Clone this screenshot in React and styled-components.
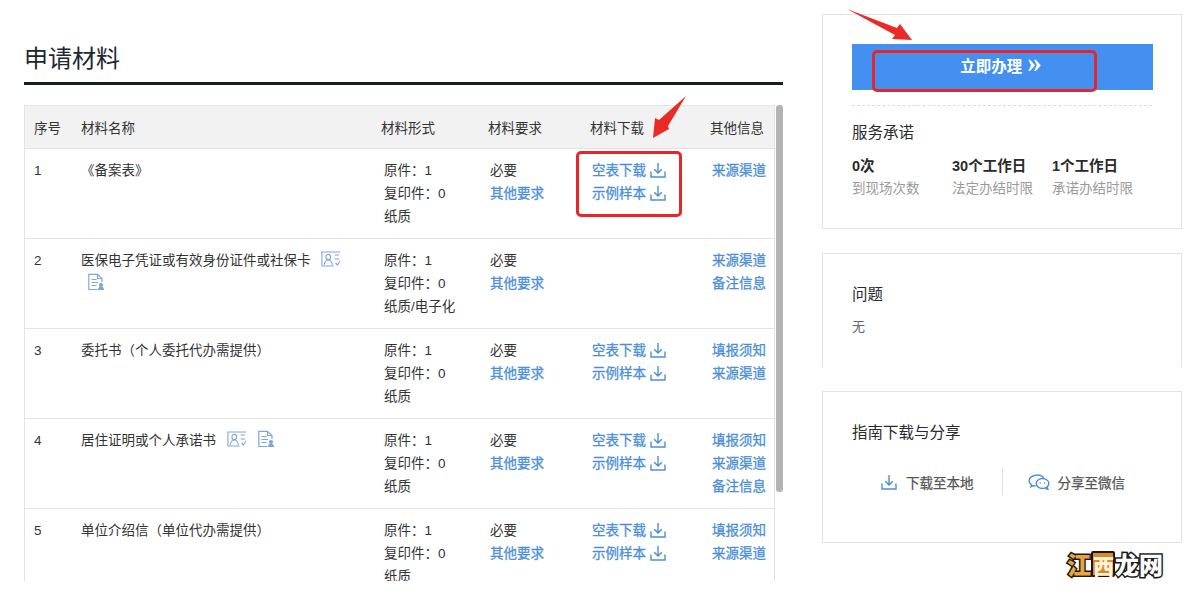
import React from "react";
import styled, { createGlobalStyle } from "styled-components";

const Global = createGlobalStyle`
  html, body { margin: 0; padding: 0; background: #fff; overflow: hidden; }
  body { font-family: "Liberation Sans", "Noto Sans CJK SC", sans-serif; color: #333; }
  * { box-sizing: border-box; }
`;

const Page = styled.div`
  position: relative; width: 1200px; height: 594px; overflow: hidden;
  display: flex; gap: 39px; padding: 14px 0 0 24px;
`;
const Main = styled.main`width: 759px; padding-top: 28px; flex: none;`;
const Heading = styled.h2`
  margin: 0; height: 43px; line-height: 34px; font-size: 24px; font-weight: 400; color: #1d2730;
  border-bottom: 3px solid #141e27;
`;
const TableArea = styled.div`display: flex; gap: 1px; margin-top: 20px;`;
const TableClip = styled.div`
  width: 751px; height: 476px; overflow: hidden; flex: none;
  border-left: 1px solid #e3e3e3; border-right: 1px solid #e3e3e3; border-top: 1px solid #e6e6e6;
`;
const Track = styled.div`width: 7px; flex: none;`;
const Thumb = styled.div`width: 7px; height: 387px; background: #b4b4b4; border-radius: 3px;`;
const Table = styled.table`
  width: 749px; table-layout: fixed; border-collapse: collapse; font-size: 13.5px; color: #333;
`;
const Th = styled.th`
  width: ${p => p.$w}px; height: 42px; padding: 0 0 0 ${p => p.$pl || 10}px; text-align: left;
  font-weight: 400; background: #f2f2f2; border-bottom: 1px solid #e3e3e3; white-space: nowrap;
`;
const Tr = styled.tr`border-bottom: 1px solid #e3e3e3;`;
const Td = styled.td`
  height: 90px; vertical-align: top; line-height: 23px;
  padding: 10px ${p => p.$pr || 0}px 0 ${p => p.$pl || 12}px;
`;
const Line = styled.div`white-space: nowrap;`;
const Link = styled.div`
  display: flex; align-items: center; gap: 4px; white-space: nowrap; color: #4d8fd6; height: 23px;
  -webkit-text-stroke: 0.3px #4d8fd6;
`;
const DlSvg = styled.svg`width: 16px; height: 16px; flex: none; fill: none; stroke: ${p => p.$c || "#4d8fd6"}; stroke-width: 1.4;`;
const TagIcon = styled.svg`
  display: inline-block; vertical-align: -2px; margin-left: 7px; height: 16px; width: ${p => p.$w}px;
  fill: none; stroke: #7fa6da; stroke-width: 1.2;
`;

const Side = styled.aside`width: 360px; flex: none; display: flex; flex-direction: column;`;
const Card = styled.section`
  border: 1px solid #e3e3e3; padding: 29px 29px 0;
  height: ${p => p.$h}px; margin-bottom: ${p => p.$mb || 0}px;
  ${p => p.$open && "border-bottom: none;"}
`;
const Cta = styled.button`
  display: flex; align-items: center; justify-content: center; gap: 5px; width: 301px; height: 46px;
  border: none; background: #4390f0; color: #fff; padding: 0 3px 5px 0;
  font: 700 15.5px "Liberation Serif", "Noto Sans CJK SC", serif;
`;
const Chev = styled.span`font-size: 29px; line-height: 20px; margin-top: -5px;`;
const Dash = styled.div`border-top: 1px dashed #dcdcdc; margin-top: 15px;`;
const CardTitle = styled.h3`
  margin: ${p => p.$mt}px 0 0; font-size: 15.5px; line-height: 22px; font-weight: 400; color: #2b2b2b;
`;
const Stats = styled.div`display: flex; margin-top: 11px;`;
const Stat = styled.div`width: 100px;`;
const StatValue = styled.div`font-size: 14.5px; line-height: 22px; font-weight: 700; color: #2a2a2a;`;
const StatLabel = styled.div`font-size: 13.5px; line-height: 22px; margin-top: 1px; color: #9a9a9a; white-space: nowrap;`;
const Body = styled.p`margin: 11px 0 0; font-size: 13px; line-height: 20px; color: #666;`;
const Actions = styled.div`display: flex; align-items: center; margin-top: 25px; height: 26px;`;
const Action = styled.div`
  display: flex; align-items: center; gap: ${p => p.$gap}px; width: ${p => p.$w}px; padding-left: ${p => p.$pl}px;
  font-size: 13.5px; color: #555; white-space: nowrap; -webkit-text-stroke: 0.25px #555;
  ${p => p.$div && "border-right: 1px solid #e0e0e0; height: 26px;"}
`;

const RedBox = styled.div`
  position: absolute; left: ${p => p.$x}px; top: ${p => p.$y}px; width: ${p => p.$w}px; height: ${p => p.$h}px;
  border: 3px solid #e8262a; border-radius: 5px;
`;
const Arrow = styled.svg`
  position: absolute; left: ${p => p.$x}px; top: ${p => p.$y}px; width: ${p => p.$w}px; height: ${p => p.$h}px; fill: #ea2a27;
`;
const Watermark = styled.div`
  position: absolute; left: 1067px; top: 549px; display: flex; align-items: center; font-size: 24px; line-height: 30px; font-weight: 900;
  font-family: "Noto Sans CJK SC", sans-serif;
`;
const WmChar = styled.span`
  width: 24px; text-align: center; color: ${p => p.$c}; -webkit-text-stroke: 3px #1a1a1a; paint-order: stroke fill;
`;
const WmBox = styled.span`
  width: 24px; height: 26px; line-height: 24px; text-align: center; background: #df8a1f; color: #fff3df;
  border: 2px solid #1f1408; border-radius: 2px; font-size: 21px;
`;

const Dl = ({ c }) => (
  <DlSvg $c={c} viewBox="0 0 16 16"><path d="M1 9.5V15h14V9.5M8 1v9.5M4.2 7.2 8 11l3.8-3.8" /></DlSvg>
);
const IdIcon = () => (
  <TagIcon $w={20} viewBox="0 0 22 16" preserveAspectRatio="none">
    <path d="M21 1H1v14h13M15 4h5M15 8h5M16 12l2 2 3-4" />
    <circle cx="8" cy="6" r="2.6" /><path d="M3.5 14c.5-3.5 2.5-5 4.5-5s4 1.5 4.5 5" />
  </TagIcon>
);
const DocIcon = () => (
  <TagIcon $w={16} viewBox="0 0 16 16" style={{ height: 17 }}>
    <path d="M9.500 16H.8V.8H9.500L14 5v3.500M9.500.8V5H14M3.500 6h5M3.500 9h6.500M3.500 12h5" />
    <circle cx="13" cy="11.500" r="1.500" fill="#7fa6da" /><path d="M10.500 16c.4-2 1.500-2.500 2.500-2.500s2 .5 2.500 2.500z" fill="#7fa6da" />
  </TagIcon>
);
const WeChat = () => (
  <svg width="22" height="16" viewBox="0 0 22 16" fill="none" stroke="#4d8fd6" strokeWidth="1.4">
    <path d="M9.500 1C5 1 1 3.500 1 6.800c0 1.700 1 3 2.500 4L3 12.800l2.500-1.200c.8.200 1.500.3 2.300.3" />
    <path d="M9.500 1c3 0 5.500 1.500 6.500 3.500" />
    <ellipse cx="14.500" cy="9.500" rx="6.300" ry="5" />
    <path d="M19 13l1 2.500-2.700-1.200" />
    <circle cx="12.300" cy="9" r=".8" fill="#4d8fd6" stroke="none" /><circle cx="16.700" cy="9" r=".8" fill="#4d8fd6" stroke="none" />
  </svg>
);

const rows = [
  { n: 1, name: "《备案表》", form: "纸质", info: ["来源渠道"], dl: true },
  { n: 2, name: "医保电子凭证或有效身份证件或社保卡", form: "纸质/电子化", icons: true, info: ["来源渠道", "备注信息"] },
  { n: 3, name: "委托书（个人委托代办需提供）", form: "纸质", info: ["填报须知", "来源渠道"], dl: true },
  { n: 4, name: "居住证明或个人承诺书", form: "纸质", icons: true, info: ["填报须知", "来源渠道", "备注信息"], dl: true },
  { n: 5, name: "单位介绍信（单位代办需提供）", form: "纸质", info: ["填报须知", "来源渠道"], dl: true },
];
const stats = [["0次", "到现场次数"], ["30个工作日", "法定办结时限"], ["1个工作日", "承诺办结时限"]];

export default function App() {
  return (
    <Page>
      <Global />
      <Main>
        <Heading>申请材料</Heading>
        <TableArea>
          <TableClip>
            <Table>
              <thead>
                <tr>
                  <Th $w={47} $pl={9}>序号</Th><Th $w={299} $pl={9}>材料名称</Th><Th $w={107}>材料形式</Th>
                  <Th $w={102}>材料要求</Th><Th $w={120}>材料下载</Th><Th $w={74}>其他信息</Th>
                </tr>
              </thead>
              <tbody>
                {rows.map(r => (
                  <Tr key={r.n}>
                    <Td $pl={9}>{r.n}</Td>
                    <Td $pl={9} $pr={19}>
                      {r.name}
                      {r.icons && <>{" "}<IdIcon />{" "}<DocIcon /></>}
                    </Td>
                    <Td $pl={13}>
                      <Line>原件：1</Line><Line>复印件：0</Line><Line>{r.form}</Line>
                    </Td>
                    <Td>
                      <Line>必要</Line><Link>其他要求</Link>
                    </Td>
                    <Td>
                      {r.dl && <><Link>空表下载<Dl /></Link><Link>示例样本<Dl /></Link></>}
                    </Td>
                    <Td>{r.info.map(t => <Link key={t}>{t}</Link>)}</Td>
                  </Tr>
                ))}
              </tbody>
            </Table>
          </TableClip>
          <Track><Thumb /></Track>
        </TableArea>
      </Main>
      <Side>
        <Card $h={215} $mb={24}>
          <Cta>立即办理 <Chev>»</Chev></Cta>
          <Dash />
          <CardTitle $mt={16}>服务承诺</CardTitle>
          <Stats>
            {stats.map(([v, l]) => (
              <Stat key={l}><StatValue>{v}</StatValue><StatLabel>{l}</StatLabel></Stat>
            ))}
          </Stats>
        </Card>
        <Card $h={114} $mb={24} $open>
          <CardTitle $mt={1}>问题</CardTitle>
          <Body>无</Body>
        </Card>
        <Card $h={152}>
          <CardTitle $mt={1}>指南下载与分享</CardTitle>
          <Actions>
            <Action $w={151} $pl={29} $gap={9} $div><Dl />下载至本地</Action>
            <Action $w={150} $pl={25} $gap={8}><WeChat />分享至微信</Action>
          </Actions>
        </Card>
      </Side>

      <RedBox $x={576} $y={151} $w={106} $h={66} />
      <RedBox $x={872} $y={50} $w={225} $h={42} />
      <Arrow $x={650} $y={95} $w={38} $h={44} viewBox="650 95 38 44">
        <polygon points="686,96 668,126 669,129 653,138 655,118 659,120" />
      </Arrow>
      <Arrow $x={846} $y={7} $w={68} $h={34} viewBox="846 7 68 34">
        <polygon points="847,9 897,28 900,24 912,40 892,39 895,35" />
      </Arrow>
      <Watermark>
        <WmChar $c="#e9a43c">江</WmChar>
        <WmBox>西</WmBox>
        <WmChar $c="#fff">龙</WmChar>
        <WmChar $c="#fff">网</WmChar>
      </Watermark>
    </Page>
  );
}
